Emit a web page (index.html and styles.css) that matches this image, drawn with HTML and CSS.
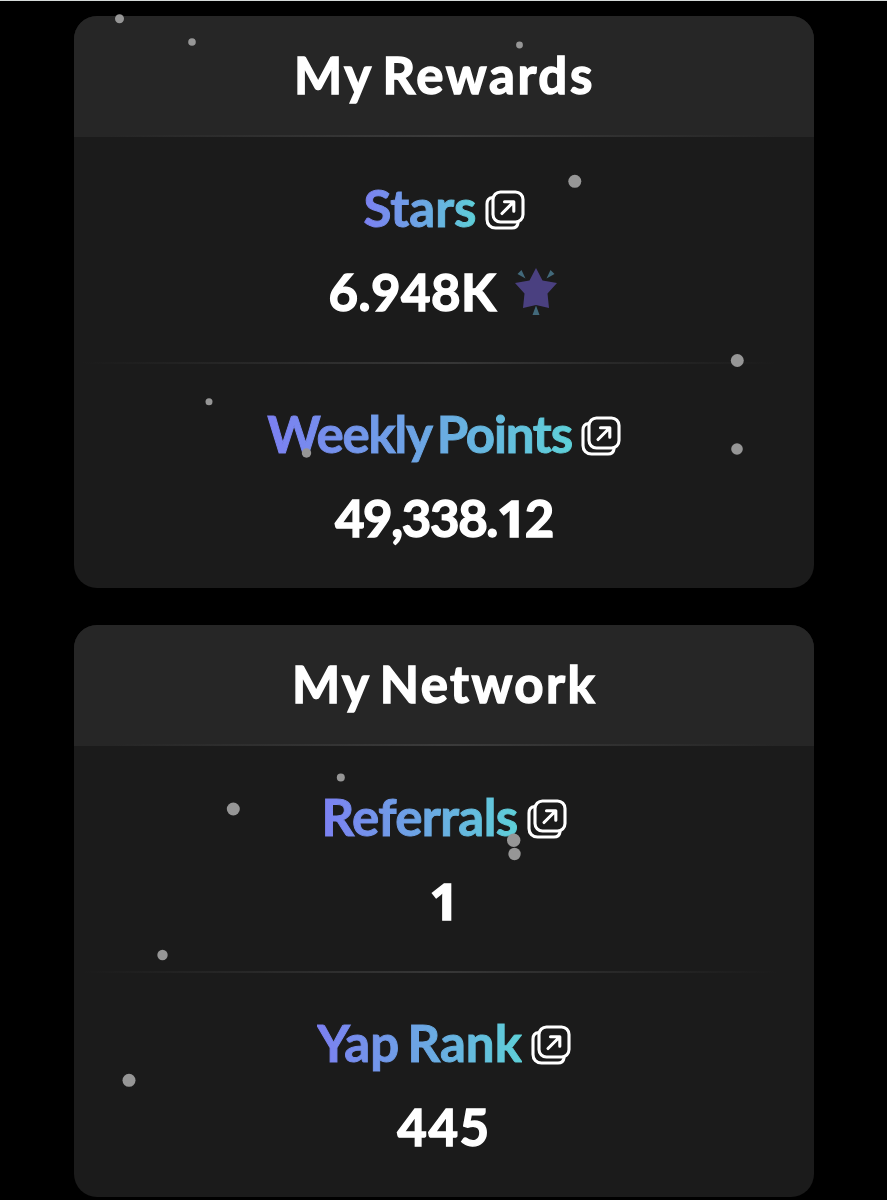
FILE: index.html
```html
<!DOCTYPE html>
<html lang="en">
<head>
<meta charset="utf-8">
<title>My Rewards</title>
<link rel="stylesheet" href="styles.css">
</head>
<body>
<svg class="defs" width="0" height="0" aria-hidden="true">
  <symbol id="open" viewBox="0 0 40 40">
    <g fill="none" stroke="#fff" stroke-width="3.100" stroke-linecap="round" stroke-linejoin="round">
      <rect x="8" y="2" width="30" height="30" rx="7.500"/>
      <path d="M7.500 7.500C4 8 2 10.500 2 14v15.500c0 5 3.500 8.500 8.500 8.500h16.500c3.500 0 5.500-1.500 6-5"/>
      <path d="M17 23.500 28.500 12M19.500 11.700h9.300v9.600"/>
    </g>
  </symbol>
</svg>
<main class="page">
  <section class="card">
    <h2 class="head"><span class="rewards">My Rewards</span></h2>
    <div class="row">
      <div class="line"><span class="title stars">Stars</span><svg class="open"><use href="#open"/></svg></div>
      <div class="line value"><span class="v-stars">6.948K</span>
        <svg class="star" viewBox="0 0 42 48">
          <path fill="#4a4080" d="M21 0 27.500 12.500 42 15 32.500 25.500 34 40 21 37 8 40 9.500 25.500 0 15 14.500 12.500Z"/>
          <path fill="#42697a" d="M2.500 6 6.500 2 10.500 10.500ZM39.500 6 35.500 2 31.500 10.500ZM21 37.500 17.500 47h7Z"/>
        </svg>
      </div>
    </div>
    <div class="row ruled">
      <div class="line"><span class="title weekly">Weekly Points</span><svg class="open"><use href="#open"/></svg></div>
      <div class="line value"><span class="v-weekly">49,338.<span class="one">1</span>2</span></div>
    </div>
  </section>
  <section class="card">
    <h2 class="head"><span class="network">My Network</span></h2>
    <div class="row">
      <div class="line"><span class="title referrals">Referrals</span><svg class="open"><use href="#open"/></svg></div>
      <div class="line value"><span class="v-ref"><span class="one">1</span></span></div>
    </div>
    <div class="row ruled">
      <div class="line"><span class="title yap">Yap Rank</span><svg class="open"><use href="#open"/></svg></div>
      <div class="line value"><span class="v-yap">445</span></div>
    </div>
  </section>
</main>
<svg class="particles" viewBox="0 0 887 1200" fill="#969696" aria-hidden="true">
  <circle cx="119.500" cy="18.800" r="4.500"/><circle cx="192" cy="42" r="3.800"/><circle cx="519.500" cy="45" r="3.400"/>
  <circle cx="574.800" cy="181.300" r="6.500"/><circle cx="737.300" cy="360.500" r="6.500"/><circle cx="737" cy="449" r="5.800"/>
  <circle cx="209" cy="401.800" r="3.500"/><circle cx="306.500" cy="453" r="4.700"/><circle cx="340.800" cy="777.500" r="4"/>
  <circle cx="233.300" cy="809" r="6.500"/><circle cx="513.700" cy="840.300" r="6.700"/><circle cx="514.500" cy="854" r="6.200"/>
  <circle cx="162.500" cy="955" r="5.200"/><circle cx="129" cy="1080.300" r="6.500"/>
</svg>
</body>
</html>
```
FILE: styles.css
```css
* { box-sizing: border-box; }
body {
  margin: 0;
  height: 1200px;
  overflow: hidden;
  background: #000;
  color: #fff;
  font: 700 51px/84px Lato, "Open Sans", sans-serif;
}
.defs, .particles { position: absolute; }
.particles { top: 0; left: 0; width: 887px; height: 1200px; pointer-events: none; }
.page {
  display: flex;
  flex-direction: column;
  align-items: center;
  gap: 37px;
  border-top: 1px solid #d5dad9;
  padding: 14.5px 0 0 1px;
}
.card {
  width: 740px;
  height: 572px;
  flex: none;
  border-radius: 23px;
  background: #1b1b1b;
  overflow: hidden;
}
.head {
  display: flex;
  align-items: center;
  justify-content: center;
  height: 121px;
  margin: 0;
  padding-bottom: 2px;
  font-size: 51px;
  font-weight: 700;
  background: linear-gradient(90deg, #262626 5%, #3b3b3b 50%, #262626 95%) bottom / 100% 2px no-repeat #262626;
}
.head span, .value span { -webkit-text-stroke: 1.4px #fff; }
.row { height: 226px; margin-top: -1px; padding-top: 30px; }
.row.ruled { margin-top: 0; background: linear-gradient(90deg, transparent 1%, #373737 50%, transparent 95%) top / 100% 2px no-repeat; }
.line {
  display: flex;
  align-items: center;
  justify-content: center;
  height: 84px;
  white-space: nowrap;
}
.title {
  background: linear-gradient(90deg, #7c80f2, #6ca5e4 50%, #5ed0d8);
  background-clip: text;
  -webkit-background-clip: text;
  color: transparent;
  -webkit-text-stroke: 1px transparent;
}
.rewards { letter-spacing: 2.6px; word-spacing: -5px; margin-right: -1px; }
.network { letter-spacing: 2.4px; word-spacing: -5px; margin-right: -1px; }
.weekly { letter-spacing: -1.2px; word-spacing: -5px; }
.referrals { letter-spacing: -0.6px; }
.yap { word-spacing: -4px; }
.v-stars { letter-spacing: 0.4px; margin-left: -2px; }
.v-weekly { letter-spacing: -1.4px; }
.v-yap { letter-spacing: 1.6px; }
.one { font-family: "Open Sans", sans-serif; line-height: 1; }
.open { width: 40px; height: 40px; margin: 4px 0 0 9px; }
.stars + .open { margin-left: 8px; }
.star { width: 42px; height: 48px; margin: 1px 0 0 19px; }
```
